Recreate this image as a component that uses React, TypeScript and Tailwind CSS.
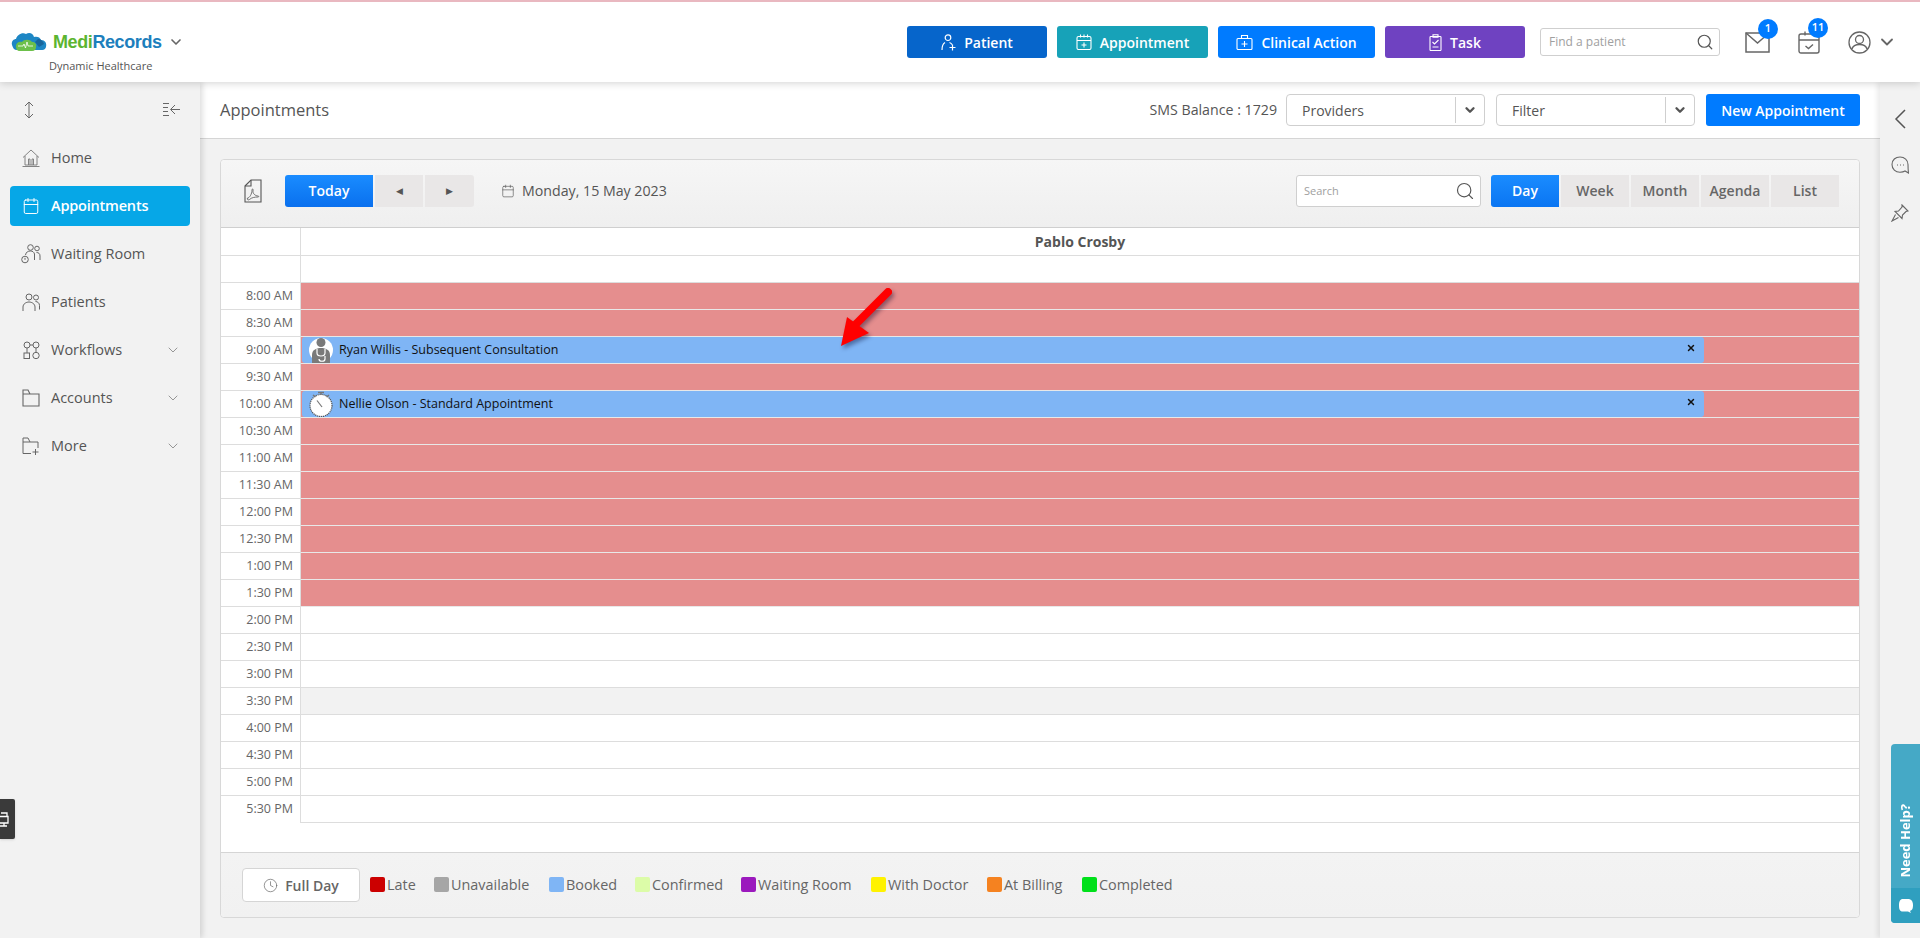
import { Calendar, ChevronDown, Clock, Search, X } from 'lucide-react';
import type { ReactNode } from 'react';

const times = [
  '8:00 AM', '8:30 AM', '9:00 AM', '9:30 AM', '10:00 AM', '10:30 AM', '11:00 AM', '11:30 AM', '12:00 PM', '12:30 PM',
  '1:00 PM', '1:30 PM', '2:00 PM', '2:30 PM', '3:00 PM', '3:30 PM', '4:00 PM', '4:30 PM', '5:00 PM', '5:30 PM',
];

const legend = [
  { label: 'Late', color: 'bg-[#cc0000]', width: 'w-[64px]' },
  { label: 'Unavailable', color: 'bg-[#a6a6a6]', width: 'w-[115px]' },
  { label: 'Booked', color: 'bg-[#7fb5f5]', width: 'w-[86px]' },
  { label: 'Confirmed', color: 'bg-[#dcfca8]', width: 'w-[106px]' },
  { label: 'Waiting Room', color: 'bg-[#9b19bd]', width: 'w-[130px]' },
  { label: 'With Doctor', color: 'bg-[#fff200]', width: 'w-[116px]' },
  { label: 'At Billing', color: 'bg-[#f58220]', width: 'w-[95px]' },
  { label: 'Completed', color: 'bg-[#00e01a]', width: 'w-[100px]' },
];

function CloudLogo() {
  return (
    <svg width="36" height="20" viewBox="0 0 36 20" className="shrink-0">
      <path d="M1 13c-1-4 2-6 4-6 1-4 6-7 10-5 3-2 7-1 8 3 3-1 6 0 7 3 4 0 6 3 5 7-1 3-3 3-5 3H6C3 18 2 16 1 13z" fill="#1d86c4" />
      <path d="M27 7c3 0 5 2 6 5l-5 3-4-5z" fill="#17659c" />
      <path d="M5 14c0-3 3-5 6-4 2-3 8-3 10 0 3 0 5 2 4 5 0 2-1 4-4 4H9c-3 0-4-2-4-5z" fill="#6cc04a" />
      <path d="M7 14h5l1-2 1.500 4 1.500-6 1 4h5" fill="none" stroke="#fff" strokeWidth="0.800" />
    </svg>
  );
}

function PdfIcon() {
  return (
    <svg width="18" height="24" viewBox="0 0 18 24" fill="none" stroke="#555" strokeWidth="1.100">
      <path d="M1 7l6-6h10v22H1z" />
      <path d="M7 1v6H1" />
      <path d="M3.500 19c2 0 4.500-4 4.500-8 0-2 1.500-1 1 1-.5 2.500 2.500 5 5 5 1 0 1 1 0 1-3 0-6.500 .5-8.500 2.500-1 1-3 0-2-1.500z" strokeWidth="0.800" />
    </svg>
  );
}

function HomeIcon() {
  return (
    <svg width="18" height="18" viewBox="0 0 18 18" fill="none" stroke="#777" strokeWidth="0.900">
      <path d="M1 8.500L9 1l8 7.500M3 7v9h12V7M0.500 17.500h17M6.500 16v-6h1.500v6M10 16v-6h1.500v6" />
    </svg>
  );
}

function WaitingIcon() {
  return (
    <svg width="20" height="20" viewBox="0 0 20 20" fill="none" stroke="#666" strokeWidth="1">
      <circle cx="9.500" cy="3.500" r="2.800" />
      <circle cx="16" cy="4.500" r="2.300" />
      <path d="M4.500 11c.5-3 2.500-4 5-4 2 0 3.500 1 4 3v6M15.500 8.500c2 0 3.500 1 3.500 3.500v4" />
      <circle cx="4" cy="15.500" r="3.300" />
      <path d="M4 13.800v2" />
    </svg>
  );
}

function PatientsIcon() {
  return (
    <svg width="18" height="19" viewBox="0 0 18 19" fill="none" stroke="#666" strokeWidth="1">
      <circle cx="7" cy="4" r="3" />
      <circle cx="14" cy="4.500" r="2.500" />
      <path d="M1 18v-4c0-3 3-5 6-5s6 2 6 5v4M13.500 8.500c2 0 4 1.500 4 4v4" />
    </svg>
  );
}

function WorkflowIcon() {
  return (
    <svg width="17" height="19" viewBox="0 0 17 19" fill="none" stroke="#666" strokeWidth="1">
      <circle cx="4" cy="4" r="3" />
      <circle cx="13" cy="4" r="3" />
      <rect x="1" y="12" width="5.500" height="5.500" />
      <circle cx="13" cy="14.500" r="3.200" />
      <path d="M7 4h3M4 7l0 5M13 7v4.300" />
    </svg>
  );
}

function AccountsIcon() {
  return (
    <svg width="18" height="18" viewBox="0 0 18 18" fill="none" stroke="#666" strokeWidth="1.100">
      <path d="M1 1h5l2 4h9v12H1zM1 5h7" />
    </svg>
  );
}

function MoreIcon() {
  return (
    <svg width="18" height="18" viewBox="0 0 18 18" fill="none" stroke="#666" strokeWidth="1">
      <path d="M9 16.500H1V1h5l2 4h8v6M1 5h7M13.500 12v6M10.500 15h6" />
    </svg>
  );
}

function CollapseIcon() {
  return (
    <svg width="18" height="16" viewBox="0 0 18 16" fill="none" stroke="#666" strokeWidth="1">
      <path d="M0 1.500h6M0 5.500h5M0 9.500h5M0 13.500h6M17 7.500H8M12 3L7.500 7.500 12 12" />
    </svg>
  );
}

function UpDownIcon() {
  return (
    <svg width="12" height="18" viewBox="0 0 12 18" fill="none" stroke="#666" strokeWidth="1">
      <path d="M6 1v16M2 5l4-4 4 4M2 13l4 4 4-4" />
    </svg>
  );
}

function PatientActionIcon() {
  return (
    <svg width="15" height="17" viewBox="0 0 15 17" fill="none" stroke="#fff" strokeWidth="1.200">
      <circle cx="7" cy="3.700" r="2.800" />
      <path d="M1 16c0-2 .5-6 3-7.500M8.500 8.500c1 .3 2 1 2.500 2M8.500 13.500h6M11.500 10.500v6" />
    </svg>
  );
}

function ApptIcon() {
  return (
    <svg width="16" height="16" viewBox="0 0 16 16" fill="none" stroke="#fff" strokeWidth="1.100">
      <rect x="1" y="2.500" width="14" height="13" rx="1.500" />
      <path d="M1 6.500h14M4.500 .5v3M8 .5v3M11.500 .5v3M8 8.500v5M5.500 11h5" />
    </svg>
  );
}

function ClinicalIcon() {
  return (
    <svg width="17" height="16" viewBox="0 0 17 16" fill="none" stroke="#fff" strokeWidth="1.100">
      <rect x="1" y="4.500" width="15" height="11" rx="1" />
      <path d="M5.500 4.500V1.500h6v3M8.500 7v6M5.500 10h6" />
    </svg>
  );
}

function TaskIcon() {
  return (
    <svg width="13" height="17" viewBox="0 0 13 17" fill="none" stroke="#fff" strokeWidth="1.100">
      <rect x="1" y="2.500" width="11" height="14" rx="0.800" />
      <path d="M4 .8h5v2.500H4zM3.500 8l2 2L9.500 6M3.500 13h6" />
    </svg>
  );
}

function MailIcon() {
  return (
    <svg width="25" height="21" viewBox="0 0 25 21" fill="none" stroke="#666" strokeWidth="1.500">
      <rect x="1" y="1" width="23" height="19" />
      <path d="M1 1l11.500 10L24 1" />
    </svg>
  );
}

function TaskCalendarIcon() {
  return (
    <svg width="22" height="23" viewBox="0 0 22 23" fill="none" stroke="#666" strokeWidth="1.400">
      <rect x="1" y="3" width="20" height="19" rx="2" />
      <path d="M1 9h20M7 .5v4M7.500 15l3 2.500 4.500-4" />
    </svg>
  );
}

function UserIcon() {
  return (
    <svg width="23" height="23" viewBox="0 0 23 23" fill="none" stroke="#666" strokeWidth="1.300">
      <circle cx="11.500" cy="11.500" r="10.500" />
      <circle cx="11.500" cy="8.500" r="4" />
      <path d="M4 18c1-3.500 4-4.500 7.500-4.500s6.500 1 7.500 4.500" />
    </svg>
  );
}

function DoctorAvatar() {
  return (
    <svg width="24" height="26" viewBox="0 0 24 26" className="shrink-0">
      <circle cx="12" cy="13" r="12" fill="#fff" />
      <circle cx="12" cy="5.500" r="4.500" fill="#7a7a7a" />
      <path d="M3 26v-8c0-5 4-7 9-7s9 2 9 7v8z" fill="#7a7a7a" />
      <path d="M8 12v4c0 2 2 3 4 3s4-1 4-3v-4M16 19v3c0 3-6 3-6 0" fill="none" stroke="#fff" strokeWidth="1.200" />
    </svg>
  );
}

function StopwatchAvatar() {
  return (
    <svg width="24" height="26" viewBox="0 0 24 26" className="shrink-0">
      <circle cx="12" cy="14.500" r="11" fill="#fff" stroke="#555" strokeWidth="1.200" strokeDasharray="1.200 0.800" />
      <path d="M9 1.500h6M12 1.500v2M4 4l2.500 2M20 4l-2.500 2" stroke="#777" strokeWidth="1.500" />
      <path d="M8 9.500l5 6.500" stroke="#777" strokeWidth="1.200" />
    </svg>
  );
}

function NavItem({ icon, label, caret, active }: { icon: ReactNode; label: string; caret?: boolean; active?: boolean }) {
  return (
    <div
      className={
        active
          ? 'mx-[10px] flex h-10 items-center rounded-[4px] bg-[#06a7e7] pl-[11px] pr-[9px] text-[14.500px] font-semibold tracking-[-0.200px] text-white'
          : 'mx-[10px] flex h-10 items-center pl-[11px] pr-[9px] text-[14.500px] font-medium text-[#555]'
      }
    >
      <span className="flex w-[20px] justify-center">{icon}</span>
      <span className="-mt-[1px] ml-[10px] flex-1">{label}</span>
      {caret && <ChevronDown size={16} strokeWidth={1} className="text-[#666]" />}
    </div>
  );
}

function ActionButton({ icon, label, color, width }: { icon: ReactNode; label: string; color: string; width: string }) {
  return (
    <div className={`flex h-8 items-center justify-center gap-[8px] rounded-[3px] text-[14px] font-semibold text-white ${color} ${width}`}>
      {icon}
      {label}
    </div>
  );
}

function SelectBox({ label }: { label: string }) {
  return (
    <div className="flex h-8 w-[199px] items-center rounded-[4px] border border-[#cfcfcf] bg-white pl-[15px] text-[14px] font-medium text-[#555]">
      <span className="flex-1">{label}</span>
      <span className="flex h-[26px] w-[29px] items-center justify-center border-l border-[#cfcfcf]">
        <ChevronDown size={14} strokeWidth={4} className="text-[#555]" />
      </span>
    </div>
  );
}

function ViewTab({ label, active }: { label: string; active?: boolean }) {
  return (
    <div
      className={
        active
          ? 'flex h-8 w-[68px] items-center justify-center rounded-l-[3px] bg-gradient-to-b from-[#1a8cff] to-[#0a75f2] text-[14px] font-semibold text-white'
          : 'flex h-8 w-[68px] items-center justify-center bg-[#e9e7e7] text-[14px] font-semibold text-[#666]'
      }
    >
      {label}
    </div>
  );
}

function EventBar({ name, avatar }: { name: string; avatar: ReactNode }) {
  return (
    <div className="ml-[1px] flex h-full w-[1402px] items-center rounded-[3px] bg-[#7fb5f5] pl-[7px] pr-[8px]">
      {avatar}
      <span className="ml-[6px] flex-1 text-[12.500px] text-[#111]">{name}</span>
      <X size={10} strokeWidth={3.500} className="mb-[4px] text-[#111]" />
    </div>
  );
}

export default function App() {
  return (
    <div className="relative h-[938px] w-[1920px] overflow-hidden bg-[#f2f2f2] font-['Open_Sans',sans-serif]">
      {/* Header */}
      <header className="relative z-20 flex h-[82px] items-center border-t-2 border-[#e9b8c0] bg-white pl-[11px] pr-[23px] shadow-[0_1px_8px_rgba(0,0,0,0.18)]">
        <div className="mt-[19px] flex w-[200px] flex-col">
          <div className="flex items-center">
            <CloudLogo />
            <span className="ml-[6px] font-['Liberation_Sans',sans-serif] text-[18px] font-bold tracking-[-0.4px]">
              <span className="text-[#5cb531]">Medi</span>
              <span className="text-[#1d7fbd]">Records</span>
            </span>
            <ChevronDown size={16} strokeWidth={2.500} className="ml-[6px] text-[#666]" />
          </div>
          <span className="ml-[38px] mt-[2px] text-[11px] font-medium text-[#555]">Dynamic Healthcare</span>
        </div>
        <div className="ml-auto flex items-center gap-[10px]">
          <ActionButton icon={<PatientActionIcon />} label="Patient" color="bg-[#0665cb]" width="w-[140px]" />
          <ActionButton icon={<ApptIcon />} label="Appointment" color="bg-[#17a2b8]" width="w-[151px]" />
          <ActionButton icon={<ClinicalIcon />} label="Clinical Action" color="bg-[#007bff]" width="w-[157px]" />
          <ActionButton icon={<TaskIcon />} label="Task" color="bg-[#6f42c1]" width="w-[140px]" />
        </div>
        <div className="ml-[15px] flex h-[28px] w-[180px] items-center rounded-[3px] border border-[#cfcfcf] bg-white pl-[8px] pr-[5px]">
          <span className="flex-1 text-[12px] text-[#a0a0a0]">Find a patient</span>
          <Search size={18} strokeWidth={1.600} className="text-[#555]" />
        </div>
        <div className="relative ml-[25px]">
          <MailIcon />
          <span className="absolute -right-[8px] -top-[13px] flex h-5 w-5 items-center justify-center rounded-full bg-[#007bff] text-[11px] font-semibold text-white">1</span>
        </div>
        <div className="relative ml-[28px]">
          <TaskCalendarIcon />
          <span className="absolute -right-[8px] -top-[13px] flex h-5 w-5 items-center justify-center rounded-full bg-[#007bff] text-[11px] font-semibold text-white">11</span>
        </div>
        <div className="ml-[28px]">
          <UserIcon />
        </div>
        <ChevronDown size={20} strokeWidth={2.200} className="ml-[6px] text-[#666]" />
      </header>

      <div className="flex h-[856px]">
        {/* Sidebar */}
        <aside className="relative z-10 w-[200px] shrink-0 bg-[#f2f2f2] shadow-[2px_0_6px_rgba(0,0,0,0.15)]">
          <div className="flex h-[56px] items-center justify-between pl-[23px] pr-[19px]">
            <UpDownIcon />
            <CollapseIcon />
          </div>
          <div className="flex flex-col gap-[8px]">
            <NavItem icon={<HomeIcon />} label="Home" />
            <NavItem active icon={<Calendar size={18} strokeWidth={1.300} />} label="Appointments" />
            <NavItem icon={<WaitingIcon />} label="Waiting Room" />
            <NavItem icon={<PatientsIcon />} label="Patients" />
            <NavItem caret icon={<WorkflowIcon />} label="Workflows" />
            <NavItem caret icon={<AccountsIcon />} label="Accounts" />
            <NavItem caret icon={<MoreIcon />} label="More" />
          </div>
        </aside>

        {/* Main */}
        <main className="w-[1680px] shrink-0">
          <div className="flex h-[57px] items-center border-b border-[#d5d5d5] bg-white pl-[20px] pr-[20px]">
            <h1 className="text-[16.500px] font-medium text-[#555]">Appointments</h1>
            <span className="ml-auto text-[14.200px] font-medium text-[#555]">SMS Balance : 1729</span>
            <div className="ml-[9px] flex items-center gap-[11px]">
              <SelectBox label="Providers" />
              <SelectBox label="Filter" />
              <div className="flex h-8 w-[154px] items-center justify-center rounded-[3px] bg-[#007bff] text-[14px] font-semibold text-white">
                New Appointment
              </div>
            </div>
          </div>

          <section className="ml-[20px] mt-[20px] h-[759px] w-[1640px] rounded-[4px] border border-[#d8d8d8] bg-white">
            {/* Toolbar */}
            <div className="flex h-[68px] items-center rounded-t-[4px] border-b border-[#cfcfcf] bg-gradient-to-b from-[#f6f6f6] to-[#efefef] pb-[6px] pl-[23px] pr-[20px]">
              <PdfIcon />
              <div className="ml-[23px] flex h-8 w-[88px] items-center justify-center rounded-l-[3px] bg-gradient-to-b from-[#1a8cff] to-[#0a70ee] text-[14px] font-semibold text-white">
                Today
              </div>
              <div className="ml-[2px] flex h-8 w-[48px] items-center justify-center bg-[#e9e7e7] text-[9px] text-[#555]">◀</div>
              <div className="ml-[2px] flex h-8 w-[49px] items-center justify-center rounded-r-[3px] bg-[#e9e7e7] text-[9px] text-[#555]">▶</div>
              <Calendar size={14} strokeWidth={1.100} className="ml-[27px] text-[#555]" />
              <span className="ml-[7px] text-[14.200px] font-medium text-[#555]">Monday, 15 May 2023</span>
              <div className="ml-auto flex h-8 w-[185px] items-center rounded-[3px] border border-[#cfcfcf] bg-white pl-[7px] pr-[5px]">
                <span className="mt-[2px] flex-1 text-[11px] text-[#a0a0a0]">Search</span>
                <Search size={20} strokeWidth={1.400} className="text-[#555]" />
              </div>
              <div className="ml-[10px] flex gap-[2px]">
                <ViewTab active label="Day" />
                <ViewTab label="Week" />
                <ViewTab label="Month" />
                <ViewTab label="Agenda" />
                <ViewTab label="List" />
              </div>
            </div>

            {/* Day grid */}
            <div className="flex h-[28px] border-b border-[#ddd]">
              <div className="w-[80px] border-r border-[#ddd]" />
              <div className="flex-1 text-center text-[14px] font-bold leading-[28px] text-[#555]">Pablo Crosby</div>
            </div>
            <div className="flex h-[27px] border-b border-[#ddd]">
              <div className="w-[80px] border-r border-[#ddd]" />
              <div className="flex-1" />
            </div>
            {times.map((time, i) => {
              const blocked = i < 12;
              const last = i === times.length - 1;
              return (
                <div key={time} className="flex h-[27px]">
                  <div className={`w-[80px] border-r border-[#ddd] pr-[7px] text-right text-[12.500px] leading-[26px] text-[#666] ${last ? '' : 'border-b'}`}>
                    {time}
                  </div>
                  <div
                    className={`flex-1 border-b ${blocked ? 'border-[#e8e8e8] bg-[#e58e8e]' : 'border-[#ddd]'} ${time === '3:30 PM' ? 'bg-[#f2f2f2]' : ''}`}
                  >
                    {time === '9:00 AM' && <EventBar name="Ryan Willis - Subsequent Consultation" avatar={<DoctorAvatar />} />}
                    {time === '10:00 AM' && <EventBar name="Nellie Olson - Standard Appointment" avatar={<StopwatchAvatar />} />}
                  </div>
                </div>
              );
            })}
            <div className="h-[29px]" />

            {/* Legend */}
            <div className="flex h-[65px] items-center rounded-b-[4px] border-t border-[#d5d5d5] bg-gradient-to-b from-[#f3f3f3] to-[#f1f1f1] pl-[21px]">
              <div className="mr-[10px] flex h-[34px] w-[118px] items-center justify-center gap-[7px] rounded-[4px] border border-[#d5d5d5] bg-white text-[14px] font-semibold text-[#666]">
                <Clock size={15} strokeWidth={1.100} />
                Full Day
              </div>
              {legend.map((item) => (
                <div key={item.label} className={`flex items-center gap-[2px] text-[14.400px] font-medium text-[#666] ${item.width}`}>
                  <span className={`h-[15px] w-[15px] shrink-0 rounded-[2px] ${item.color}`} />
                  {item.label}
                </div>
              ))}
            </div>
          </section>
        </main>

        {/* Right rail */}
        <aside className="relative z-10 flex flex-1 flex-col items-center bg-[#f2f2f2] pt-[27px] shadow-[-3px_0_5px_rgba(0,0,0,0.08)]">
          <svg width="12" height="20" viewBox="0 0 12 20" fill="none" stroke="#555" strokeWidth="1.500">
            <path d="M11 1L2 10l9 9" />
          </svg>
          <svg width="18" height="18" viewBox="0 0 18 18" fill="none" stroke="#666" strokeWidth="1.100" className="mt-[27px]">
            <path d="M9 1c4.500 0 8 3 8 7.500 0 2 0 5 .5 8.500l-3.500-2c-1.500 1-3 1.200-5 1.200-4.500 0-8-3-8-7.700S4.500 1 9 1z" />
            <path d="M6 9h1M9 9h1M12 9h1" />
          </svg>
          <svg width="18" height="18" viewBox="0 0 18 18" fill="none" stroke="#666" strokeWidth="1.100" className="mt-[30px]">
            <path d="M11 1l6 6-2 .5-3.500 3.500-.5 3.500-7-7 3.500-.5L11 3zM4.500 10.500L1 17l6.500-3.500" />
          </svg>
        </aside>
      </div>

      {/* Red arrow annotation */}
      <svg width="80" height="80" viewBox="0 0 80 80" className="absolute left-[830px] top-[280px] z-30 drop-shadow-[2px_3px_2px_rgba(0,0,40,0.4)]">
        <path d="M58 12L26 44" stroke="#f00" strokeWidth="8" strokeLinecap="round" />
        <path d="M11 66l6-29 22 16z" fill="#f00" />
      </svg>

      {/* Floating tabs */}
      <div className="absolute left-0 top-[799px] z-30 flex h-10 w-[15px] items-center justify-end overflow-hidden rounded-r-[2px] bg-[#3a3a3a] shadow">
        <svg width="11" height="15" viewBox="0 0 11 15" fill="none" stroke="#fff" strokeWidth="1.300" className="mr-[6px] shrink-0">
          <path d="M3 1h6v3M0 4.500h10V11H0M2 14h7M6 11v3" />
        </svg>
      </div>
      <div className="absolute right-0 top-[744px] z-30 flex h-[179px] w-[29px] flex-col overflow-hidden rounded-l-[4px] bg-[#45a9c6]">
        <div className="flex flex-1 items-end justify-center pb-[10px]">
          <span className="rotate-180 whitespace-nowrap text-[13px] font-bold leading-none text-white [writing-mode:vertical-rl]">Need Help?</span>
        </div>
        <div className="flex h-[35px] items-center justify-center bg-[#2f9fbf]">
          <svg width="16" height="16" viewBox="0 0 16 16" fill="#fff">
            <path d="M5 1h5c3 0 5 2 5 6s-1 5-3 6l1 2-3-1.500H5c-3 0-4-2-4-6s1-6.500 4-6.500z" />
          </svg>
        </div>
      </div>
    </div>
  );
}
